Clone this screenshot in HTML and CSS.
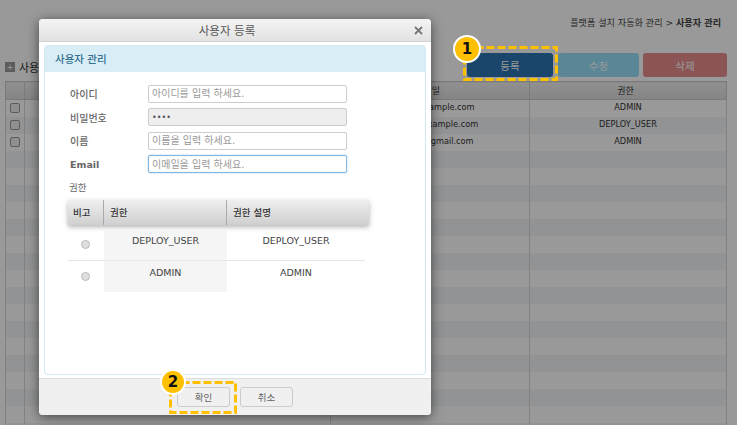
FILE: index.html
```html
<!DOCTYPE html>
<html lang="ko">
<head>
  <meta charset="UTF-8" />
  <title>사용자 등록</title>
  <link rel="stylesheet" href="styles.css">
</head>
<body>

<div class="page">
  <div class="breadcrumb">플랫폼 설치 자동화 관리 &gt; <strong>사용자 관리</strong></div>

  <div class="toolbar">
    <div class="page-title"><span class="plus">+</span>사용자 관리</div>
    <div class="actions">
      <button class="btn-add">등록</button>
      <button class="btn-edit">수정</button>
      <button class="btn-del">삭제</button>
    </div>
  </div>

  <table class="grid">
    <colgroup>
      <col class="c-check"><col class="c-id"><col class="c-mail"><col class="c-role">
    </colgroup>
    <thead>
      <tr><th></th><th>아이디</th><th>이메일</th><th>권한</th></tr>
    </thead>
    <tbody>
      <tr><td><span class="check"></span></td><td></td><td class="mail">admin@example.com</td><td>ADMIN</td></tr>
      <tr><td><span class="check"></span></td><td></td><td class="mail">deploy1@example.com</td><td>DEPLOY_USER</td></tr>
      <tr><td><span class="check"></span></td><td></td><td class="mail">admin01@gmail.com</td><td>ADMIN</td></tr>
      <tr><td></td><td></td><td></td><td></td></tr>
      <tr><td></td><td></td><td></td><td></td></tr>
      <tr><td></td><td></td><td></td><td></td></tr>
      <tr><td></td><td></td><td></td><td></td></tr>
      <tr><td></td><td></td><td></td><td></td></tr>
      <tr><td></td><td></td><td></td><td></td></tr>
      <tr><td></td><td></td><td></td><td></td></tr>
      <tr><td></td><td></td><td></td><td></td></tr>
      <tr><td></td><td></td><td></td><td></td></tr>
      <tr><td></td><td></td><td></td><td></td></tr>
      <tr><td></td><td></td><td></td><td></td></tr>
      <tr><td></td><td></td><td></td><td></td></tr>
      <tr><td></td><td></td><td></td><td></td></tr>
      <tr><td></td><td></td><td></td><td></td></tr>
      <tr><td></td><td></td><td></td><td></td></tr>
      <tr><td></td><td></td><td></td><td></td></tr>
      <tr><td></td><td></td><td></td><td></td></tr>
    </tbody>
  </table>
</div>

<div class="overlay"></div>

<div class="modal">
  <div class="modal-head">
    <span>사용자 등록</span>
    <svg class="close" width="9" height="9" viewBox="0 0 9 9"><path d="M1 1l7 7M8 1l-7 7" stroke="#777" stroke-width="1.8" fill="none"/></svg>
  </div>

  <div class="modal-body">
    <div class="panel">
      <div class="panel-head">사용자 관리</div>
      <div class="panel-body">
        <div class="field"><label>아이디</label><input type="text" placeholder="아이디를 입력 하세요."></div>
        <div class="field"><label>비밀번호</label><input type="password" class="locked" value="1234" disabled></div>
        <div class="field"><label>이름</label><input type="text" placeholder="이름을 입력 하세요."></div>
        <div class="field"><label class="bold">Email</label><input type="text" class="focus" placeholder="이메일을 입력 하세요."></div>

        <div class="role-label">권한</div>
        <div class="role-head">
          <div class="r-pick">비고</div>
          <div class="r-name">권한</div>
          <div class="r-desc">권한 설명</div>
        </div>
        <div class="role-row line">
          <div class="r-pick"><span class="radio"></span></div>
          <div class="r-name">DEPLOY_USER</div>
          <div class="r-desc">DEPLOY_USER</div>
        </div>
        <div class="role-row">
          <div class="r-pick"><span class="radio"></span></div>
          <div class="r-name">ADMIN</div>
          <div class="r-desc">ADMIN</div>
        </div>
      </div>
    </div>
  </div>

  <div class="modal-foot">
    <button>확인</button>
    <button>취소</button>
  </div>
</div>

<svg class="mark mark-1" width="95" height="35"><rect x="1.5" y="1.5" width="92" height="32" /></svg>
<div class="badge badge-1">1</div>
<svg class="mark mark-2" width="68" height="33"><rect x="1.5" y="1.5" width="65" height="30" /></svg>
<div class="badge badge-2">2</div>

</body>
</html>
```

FILE: styles.css
```css
html, body {
  margin: 0;
  padding: 0;
  height: 425px;
  overflow: hidden;
}
body {
  font-family: "DejaVu Sans", "Noto Sans CJK KR", sans-serif;
  font-size: 9.5px;
  color: #333;
  background: white;
}
button {
  font-family: inherit;
}

/* page behind the dialog */
.page {
  padding: 16px 10px 0 5px;
}
.breadcrumb {
  text-align: right;
  padding-right: 6px;
  font-size: 9.1px;
  line-height: 14px;
  color: #444;
}
.toolbar {
  display: flex;
  justify-content: space-between;
  margin-top: 23px;
  height: 24px;
}
.page-title {
  display: flex;
  align-items: center;
  gap: 4px;
  font-size: 11px;
  margin-top: 4px;
}
.plus {
  width: 10px;
  height: 10px;
  background: #999;
  color: white;
  font-size: 9px;
  line-height: 10px;
  text-align: center;
}
.actions {
  display: flex;
  gap: 4px;
}
.actions button {
  border: none;
  border-radius: 3px;
  color: white;
  font-size: 10.5px;
  height: 24px;
  padding: 0;
}
.btn-add { width: 86px; background: #2c75b5; margin-right: 1px; }
.btn-edit { width: 81px; background: #96e0fa; }
.btn-del { width: 84px; background: #e98e8e; }

.grid {
  width: 722px;
  margin-top: 4px;
  border-collapse: collapse;
  table-layout: fixed;
  border: 1px solid #ccc;
}
.c-check { width: 19px; }
.c-id { width: 306px; }
.c-mail { width: 199px; }
.grid th {
  height: 17px;
  padding: 0 5px 0 0;
  font-weight: normal;
  background: linear-gradient(#f2f2f2, #dcdcdc);
  border: 1px solid #ccc;
  font-size: 9px;
}
.grid td {
  height: 17px;
  padding: 0;
  text-align: center;
  vertical-align: top;
  border-left: 1px solid #d8d8d8;
  border-right: 1px solid #d8d8d8;
  font-size: 8.2px;
  line-height: 15px;
}
.grid tbody tr:nth-child(even) td {
  background: #f3f5f7;
}
.grid td.mail {
  white-space: nowrap;
}
.check {
  display: block;
  width: 8px;
  height: 8px;
  margin: 3px auto 0;
  border: 1px solid #999;
  border-radius: 2px;
  background: #eee;
}

.overlay {
  position: absolute;
  inset: 0;
  background: rgba(0,0,0,0.4);
}

/* dialog */
.modal {
  position: absolute;
  left: 39px;
  top: 19px;
  width: 392px;
  height: 396px;
  display: flex;
  flex-direction: column;
  background: white;
  border-radius: 4px;
  box-shadow: 0 2px 12px rgba(0,0,0,0.55);
}
.modal-head {
  flex: none;
  height: 22px;
  padding-right: 16px;
  display: flex;
  align-items: center;
  justify-content: center;
  background: linear-gradient(#f4f4f4, #e2e2e2);
  border-bottom: 1px solid #d0d0d0;
  border-radius: 4px 4px 0 0;
  font-size: 11.5px;
  color: #555;
  position: relative;
}
.close {
  position: absolute;
  right: 8px;
  top: 7px;
}
.modal-body {
  flex: 1;
  padding: 3px 5px;
  min-height: 0;
}
.panel {
  height: 100%;
  box-sizing: border-box;
  border: 1px solid #cdeaf5;
  border-radius: 4px;
}
.panel-head {
  height: 26px;
  line-height: 26px;
  padding-left: 10px;
  background: #d9edf7;
  color: #31708f;
  font-size: 10.5px;
  font-weight: 500;
}
.panel-body {
  padding: 12px 0 0 23px;
}
.field {
  display: flex;
  align-items: center;
  height: 19px;
  margin-bottom: 4.6px;
}
.field label {
  width: 80px;
  flex: none;
  padding-left: 2px;
  box-sizing: border-box;
  font-size: 10px;
  color: #666;
  font-weight: 500;
}
.field label.bold {
  font-weight: bold;
  font-size: 9.5px;
}
.field input {
  width: 199px;
  height: 18px;
  box-sizing: border-box;
  padding: 0 3px;
  border: 1px solid #ccc;
  border-radius: 2px;
  font-family: inherit;
  font-size: 10px;
  color: #555;
  background: white;
  outline: none;
}
.field input::placeholder {
  color: #999;
}
.field input.locked {
  background: #eee;
  font-size: 8px;
}
.field input.focus {
  border-color: #82b5e0;
  box-shadow: 0 0 2px rgba(102,175,233,0.6);
}
.role-label {
  margin: 7px 0 0 1px;
  font-size: 9.5px;
  line-height: 14px;
  color: #666;
}
.role-head {
  display: flex;
  width: 301px;
  height: 25px;
  margin-top: 5px;
  align-items: stretch;
  background: linear-gradient(#efefef, #cfcfcf);
  box-shadow: 0 2px 5px rgba(0,0,0,0.3);
  font-size: 9.5px;
  font-weight: 500;
  color: #333;
}
.role-head > div {
  display: flex;
  align-items: center;
  box-sizing: border-box;
}
.role-head .r-pick { width: 36px; padding-left: 5px; border-right: 1px solid #aaa; }
.role-head .r-name { width: 123px; padding-left: 6px; border-right: 1px solid #aaa; }
.role-head .r-desc { flex: 1; padding-left: 6px; }

.role-row {
  display: flex;
  width: 297px;
  height: 31px;
  text-align: center;
  font-size: 9.5px;
  color: #444;
}
.role-head + .role-row {
  margin-top: 4px;
}
.role-row.line {
  border-bottom: 1px solid #e5e5e5;
}
.role-row .r-pick {
  width: 36px;
  padding: 11px 2px 0 0;
  box-sizing: border-box;
}
.role-row .r-name {
  width: 123px;
  padding-top: 6px;
  box-sizing: border-box;
  background: #f5f5f5;
}
.role-row .r-desc {
  flex: 1;
  padding-top: 6px;
}
.radio {
  display: block;
  width: 7px;
  height: 7px;
  margin: 0 auto;
  border: 1px solid #bbb;
  border-radius: 50%;
  background: #ddd;
}
.modal-foot {
  flex: none;
  height: 37px;
  display: flex;
  gap: 10px;
  padding: 8px 0 0 138px;
  box-sizing: border-box;
  background: #f0f0f0;
  border-top: 1px solid #ddd;
  border-radius: 0 0 4px 4px;
}
.modal-foot button {
  width: 53px;
  height: 20px;
  padding: 0;
  background: #f0f0f0;
  border: 1px solid #ccc;
  border-radius: 3px;
  font-size: 9.5px;
  color: #666;
}

/* callouts */
.mark {
  position: absolute;
}
.mark rect {
  fill: none;
  stroke: #ffc000;
  stroke-width: 3;
  stroke-dasharray: 8 3;
}
.mark-1 { left: 463px; top: 46px; }
.mark-2 { left: 169px; top: 381px; }
.badge {
  position: absolute;
  box-sizing: border-box;
  border: 2px solid white;
  border-radius: 50%;
  background: #ffc000;
  color: #111;
  font-weight: bold;
  text-align: center;
}
.badge-1 { left: 453px; top: 35px; width: 28px; height: 28px; font-size: 15px; line-height: 24px; }
.badge-2 { left: 160px; top: 369px; width: 26px; height: 26px; font-size: 15px; line-height: 22px; }
```
